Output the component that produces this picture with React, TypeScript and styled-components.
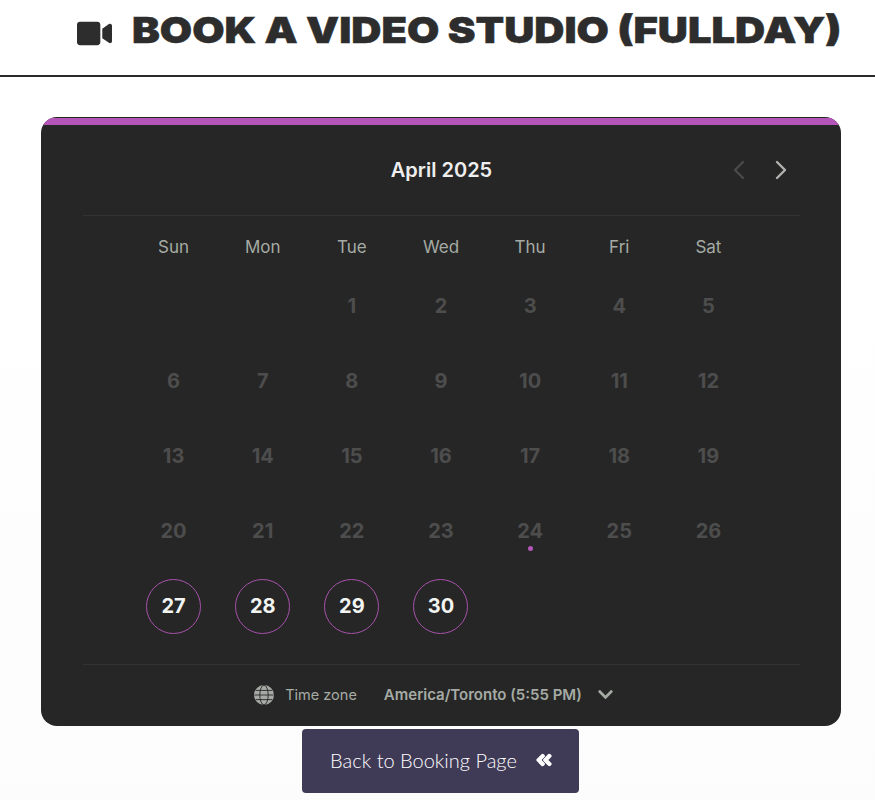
import { ChevronLeft, ChevronRight } from 'lucide-react';
import { FaAngleDoubleLeft, FaChevronDown, FaVideo } from 'react-icons/fa';
import styled, { createGlobalStyle } from 'styled-components';

const WEEK_DAYS = ['Sun', 'Mon', 'Tue', 'Wed', 'Thu', 'Fri', 'Sat'];
const DAYS = Array.from({ length: 30 }, (_, index) => index + 1);
const FIRST_AVAILABLE = 27;
const TODAY = 24;
const LEADING_BLANKS = 2;

const GlobeIcon = () => (
  <svg width="20" height="20" viewBox="0 0 20 20" fill="none">
    <circle cx="10" cy="10" r="10" fill="currentColor" />
    <g stroke="#262626" strokeWidth="0.9">
      <ellipse cx="10" cy="10" rx="4.2" ry="9.8" />
      <path d="M0.4 10h19.2M1.8 5.4h16.4M1.8 14.6h16.4" />
    </g>
  </svg>
);

export default function App() {
  return (
    <Page>
      <GlobalStyle />
      <Header>
        <VideoIcon />
        <Title>BOOK A VIDEO STUDIO (FULLDAY)</Title>
      </Header>
      <Main>
        <Card>
          <AccentBar />
          <CardBody>
            <MonthBar>
              <MonthName>April 2025</MonthName>
              <MonthNav>
                <NavButton $muted>
                  <ChevronLeft size={32} strokeWidth={1.8} />
                </NavButton>
                <NavButton>
                  <ChevronRight size={32} strokeWidth={1.8} />
                </NavButton>
              </MonthNav>
            </MonthBar>
            <Calendar>
              {WEEK_DAYS.map((day) => (
                <WeekDay key={day}>{day}</WeekDay>
              ))}
              {Array.from({ length: LEADING_BLANKS }, (_, index) => (
                <span key={index} />
              ))}
              {DAYS.map((day) => (
                <DayCell key={day}>
                  <Day $available={day >= FIRST_AVAILABLE}>
                    {day}
                    {day === TODAY && <TodayDot />}
                  </Day>
                </DayCell>
              ))}
            </Calendar>
            <TimeZoneBar>
              <GlobeIcon />
              <TimeZoneLabel>Time zone</TimeZoneLabel>
              <TimeZoneValue>America/Toronto (5:55 PM)</TimeZoneValue>
              <FaChevronDown size={17} />
            </TimeZoneBar>
          </CardBody>
        </Card>
        <BackButton>
          Back to Booking Page
          <BackIcon />
        </BackButton>
      </Main>
    </Page>
  );
}

const GlobalStyle = createGlobalStyle`
  html, body {
    margin: 0;
    padding: 0;
  }
  body {
    font-family: 'Inter', 'Liberation Sans', sans-serif;
  }
`;

const Page = styled.div`
  width: 875px;
  height: 800px;
  overflow: hidden;
  background: linear-gradient(#ffffff 30%, #fcfcfd 100%);
`;

const Header = styled.header`
  height: 75px;
  border-bottom: 2px solid #2a2a2a;
  display: flex;
  align-items: center;
  padding-left: 77px;
  color: #2d2d2d;
`;

const VideoIcon = styled(FaVideo)`
  width: 35px;
  height: 35px;
  flex: none;
  margin: 0 20px 8px 0;
`;

const Title = styled.h1`
  margin: 0 0 15px;
  font-family: 'Inter', 'Liberation Sans', sans-serif;
  font-weight: 900;
  font-size: 36px;
  line-height: 44px;
  white-space: nowrap;
  -webkit-text-stroke: 0.5px #2d2d2d;
  transform: scaleX(1.159);
  transform-origin: left center;
`;

const Main = styled.main`
  display: flex;
  flex-direction: column;
  align-items: center;
  padding: 40px 0 0 7px;
`;

const Card = styled.section`
  width: 800px;
  height: 609px;
  flex: none;
  box-sizing: border-box;
  padding-top: 1px;
  border-radius: 16px;
  overflow: hidden;
  background: #262626;
  display: flex;
  flex-direction: column;
`;

const AccentBar = styled.div`
  height: 7px;
  flex: none;
  background: #b455b8;
`;

const CardBody = styled.div`
  flex: 1;
  padding: 0 41px 0 42px;
  display: flex;
  flex-direction: column;
`;

const MonthBar = styled.div`
  height: 91px;
  flex: none;
  box-sizing: border-box;
  border-bottom: 1px solid #333333;
  display: flex;
  align-items: center;
  justify-content: center;
  position: relative;
`;

const MonthName = styled.div`
  font-size: 20px;
  font-weight: 600;
  color: #eeeeee;
`;

const MonthNav = styled.div`
  position: absolute;
  right: 3px;
  top: 29px;
  display: flex;
  gap: 10px;
`;

const NavButton = styled.span<{ $muted?: boolean }>`
  width: 32px;
  height: 32px;
  display: flex;
  color: ${(p) => (p.$muted ? '#4a4a4a' : '#b0b3ae')};
`;

const Calendar = styled.div`
  width: 624px;
  height: 448px;
  flex: none;
  margin-left: 46px;
  display: grid;
  grid-template-columns: repeat(7, 1fr);
  grid-template-rows: 53px;
  grid-auto-rows: 75px;
`;

const WeekDay = styled.div`
  display: flex;
  align-items: center;
  justify-content: center;
  padding-top: 9px;
  font-size: 17px;
  color: #a5aba4;
`;

const DayCell = styled.div`
  display: flex;
  align-items: center;
  justify-content: center;
`;

const Day = styled.div<{ $available: boolean }>`
  width: 55px;
  height: 55px;
  box-sizing: border-box;
  padding-bottom: 2px;
  border-radius: 50%;
  position: relative;
  display: flex;
  align-items: center;
  justify-content: center;
  font-size: 20px;
  font-weight: 700;
  color: ${(p) => (p.$available ? '#f2f4f2' : '#4d4d4d')};
  border: ${(p) => (p.$available ? '1px solid #a652aa' : 'none')};
`;

const TodayDot = styled.i`
  position: absolute;
  left: 50%;
  bottom: 8px;
  width: 5px;
  height: 5px;
  margin-left: -2.5px;
  border-radius: 50%;
  background: #b455b8;
`;

const TimeZoneBar = styled.div`
  flex: 1;
  border-top: 1px solid #333333;
  display: flex;
  align-items: center;
  justify-content: center;
  padding: 0 15px 2px 0;
  color: #a5aba4;
  font-size: 14.5px;
`;

const TimeZoneLabel = styled.span`
  margin: 0 27px 0 11px;
`;

const TimeZoneValue = styled.span`
  font-size: 15px;
  font-weight: 600;
  margin-right: 15px;
`;

const BackButton = styled.button`
  width: 277px;
  height: 64px;
  margin: 3px 0 0 -2px;
  padding: 0 0 3px 3px;
  flex: none;
  border: 0;
  border-radius: 4px;
  background: #3f3a56;
  color: #ffffff;
  display: flex;
  align-items: center;
  justify-content: center;
  gap: 18px;
  font-family: 'Lato', 'Liberation Sans', sans-serif;
  font-size: 20px;
  font-weight: 300;
`;

const BackIcon = styled(FaAngleDoubleLeft)`
  width: 18px;
  height: 18px;
  stroke: currentColor;
  stroke-width: 40;
`;
